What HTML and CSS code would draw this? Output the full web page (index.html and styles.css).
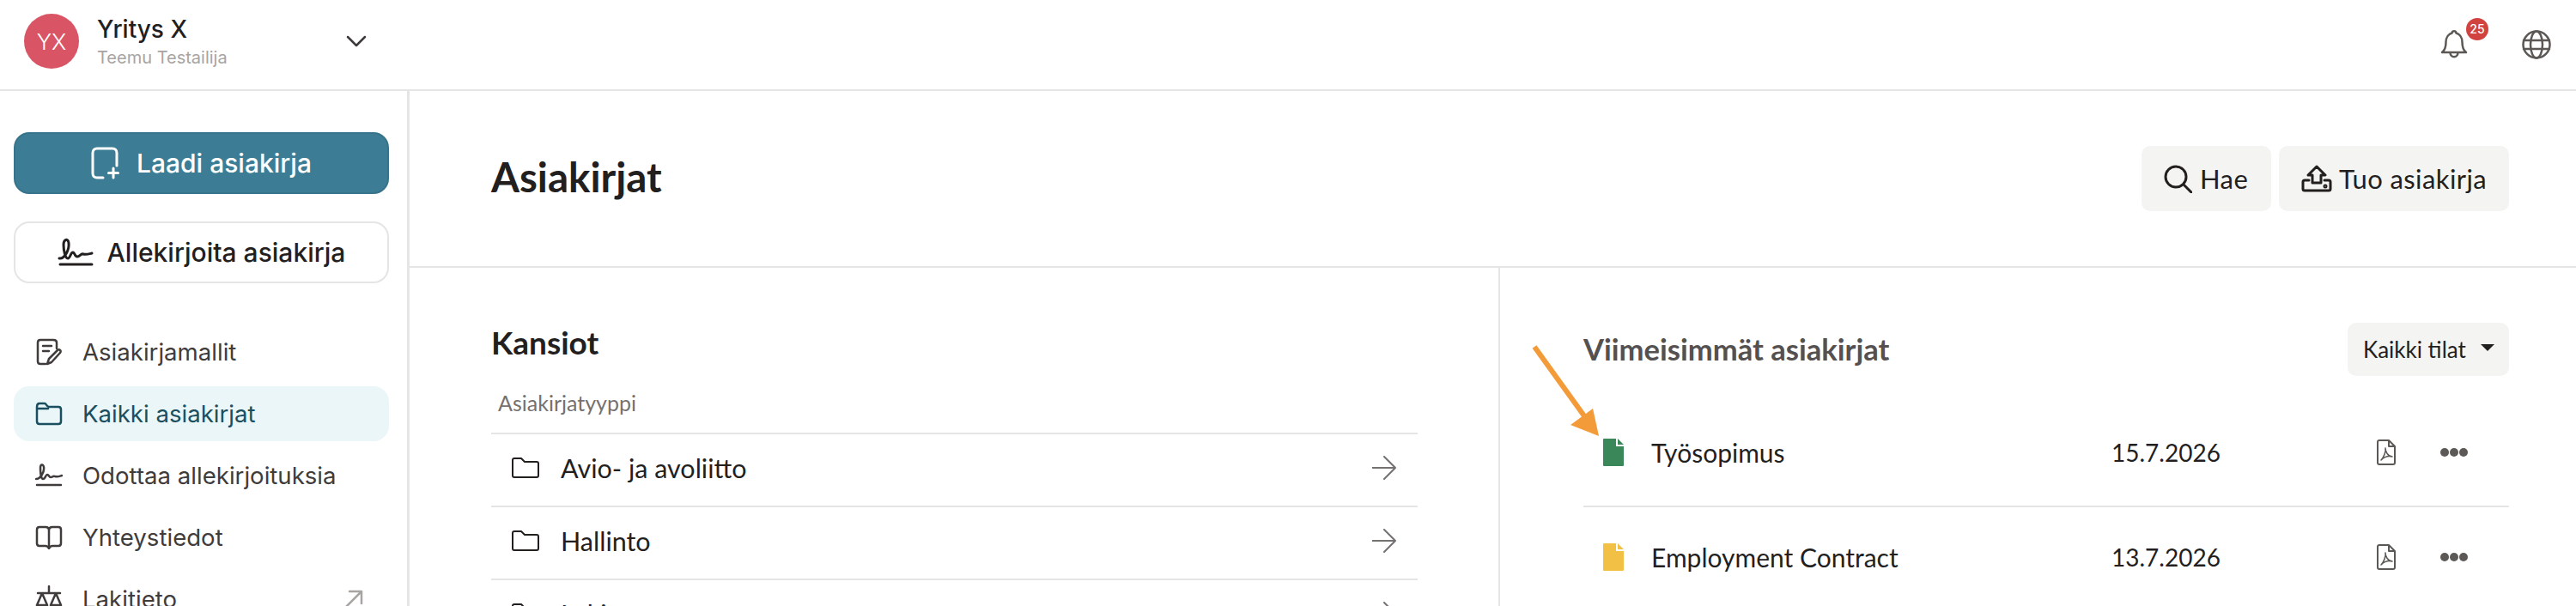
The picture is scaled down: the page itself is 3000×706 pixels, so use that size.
FILE: index.html
```html
<!doctype html>
<html lang="fi">
<head>
    <meta charset="UTF-8">
    <title>Asiakirjat</title>
    <link rel="stylesheet" href="styles.css">
</head>
<body>
    <header class="topbar">
        <div class="account">
            <div class="avatar">YX</div>
            <div class="account-text">
                <div class="account-name">Yritys X</div>
                <div class="account-user">Teemu Testailija</div>
            </div>
            <svg class="chevron" width="24" height="14" viewBox="0 0 24 14"><path d="M2 2 L12 12 L22 2"></path></svg>
        </div>
        <div class="top-icons">
            <div class="bell">
                <svg width="32" height="36" viewBox="0 0 32 36"><path d="M2 27 C6 24 6.500 20 6.500 15 C6.500 9 10 5.500 13.500 4.500 C14 1.500 18 1.500 18.500 4.500 C22 5.500 25.500 9 25.500 15 C25.500 20 26 24 30 27 Z M11.500 27 C11.500 34 20.500 34 20.500 27"></path></svg>
                <span class="badge">25</span>
            </div>
            <svg class="globe" width="36" height="36" viewBox="0 0 36 36"><circle cx="18" cy="18" r="15.500"></circle><ellipse cx="18" cy="18" rx="7" ry="15.500"></ellipse><path d="M3 13 H33 M3 23 H33"></path></svg>
        </div>
    </header>
    <div class="layout">
        <aside class="sidebar">
            <button class="btn-primary">
                <svg width="34" height="38" viewBox="0 0 34 38"><path d="M14 36 H7 C4 36 2 34 2 31 V7 C2 4 4 2 7 2 H25 C28 2 30 4 30 7 V22"></path><path d="M26 25 V36 M20.500 30.500 H31.500"></path></svg>
                Laadi asiakirja
            </button>
            <button class="btn-secondary">
                <svg width="42" height="34" viewBox="0 0 42 34"><path d="M2 24 C8 25 14 14 13 6 C12 0 7 2 7 8 C7 15 9 24 12 24 C15 24 15 17 18 17 C20 17 20 22 23 22 C26 22 27 18 30 19 C33 20 36 19 40 18"></path><path d="M3 31 H40"></path></svg>
                Allekirjoita asiakirja
            </button>
            <nav class="nav">
                <a class="nav-item">
                    <svg width="32" height="32" viewBox="0 0 32 32"><path d="M12 30 H6 C4 30 3 29 3 27 V5 C3 3 4 2 6 2 H21 C23 2 25 3 25 5 V12 M9 9 H19 M9 15 H16"></path><path d="M14 30 L16 24 L26 14 C28 12 31 15 29 17 L19 28 Z"></path></svg>
                    Asiakirjamallit
                </a>
                <a class="nav-item nav-active">
                    <svg width="32" height="28" viewBox="0 0 32 28"><path d="M2 6 C2 3 3 2 5 2 H11 C13 2 13 6 16 6 H27 C29 6 30 7 30 9 V23 C30 25 29 26 27 26 H5 C3 26 2 25 2 23 Z M2 8 H15"></path></svg>
                    Kaikki asiakirjat
                </a>
                <a class="nav-item">
                    <svg width="32" height="28" viewBox="0 0 32 28"><path d="M1 18 C6 18 11 10 10 4 C9 0 6 1 6 5 C6 11 7 18 9 18 C12 18 12 13 14 13 C16 13 16 16 18 16 C20 16 21 14 23 15 C26 16 28 15 31 14"></path><path d="M2 25 H30"></path></svg>
                    Odottaa allekirjoituksia
                </a>
                <a class="nav-item">
                    <svg width="32" height="28" viewBox="0 0 32 28"><path d="M16 6 C16 3 14 2 12 2 H5 C3 2 2 3 2 5 V21 C2 23 3 24 5 24 H12 C14 24 15 25 16 27 C17 25 18 24 20 24 H27 C29 24 30 23 30 21 V5 C30 3 29 2 27 2 H20 C18 2 16 3 16 6 V27"></path></svg>
                    Yhteystiedot
                </a>
                <a class="nav-item">
                    <svg width="32" height="32" viewBox="0 0 32 32"><path d="M16 1 V8 M3 9 H29 M8 9 L2 23 H14 Z M24 9 L18 23 H30 Z M2 23 C2 30 14 30 14 23 M18 23 C18 30 30 30 30 23"></path></svg>
                    Lakitieto
                    <svg class="nav-ext" width="22" height="22" viewBox="0 0 22 22"><path d="M2 20 L20 2 M6 2 H20 V16"></path></svg>
                </a>
            </nav>
        </aside>
        <main class="content">
            <div class="page-head">
                <h1>Asiakirjat</h1>
                <div class="actions">
                    <button class="btn-grey btn-search">
                        <svg width="33" height="33" viewBox="0 0 33 33"><circle cx="14" cy="14" r="12"></circle><path d="M23 23 L32 32"></path></svg>
                        Hae
                    </button>
                    <button class="btn-grey btn-import">
                        <svg width="36" height="32" viewBox="0 0 36 32"><path d="M18 2 L28 12 H23 V21 H13 V12 H8 Z"></path><path d="M9 18 H4 C2.500 18 2 18.500 2 20 V28 C2 29.500 2.500 30 4 30 H32 C33.500 30 34 29.500 34 28 V20 C34 18.500 33.500 18 32 18 H27"></path><circle cx="28" cy="25" r="1"></circle></svg>
                        Tuo asiakirja
                    </button>
                </div>
            </div>
            <div class="columns">
                <section class="folders">
                    <h2>Kansiot</h2>
                    <div class="folders-label">Asiakirjatyyppi</div>
                    <div class="folder-row">
                        <svg class="folder-icon" width="32" height="24" viewBox="0 0 32 24"><path d="M1 3 C1 2 2 1 3 1 H11 L15 5 H29 C30 5 31 6 31 7 V21 C31 22 30 23 29 23 H3 C2 23 1 22 1 21 Z"></path></svg>
                        <span class="folder-name">Avio- ja avoliitto</span>
                        <svg class="arrow-icon" width="28" height="28" viewBox="0 0 28 28"><path d="M0 14 H27 M14 1 L27 14 L14 27"></path></svg>
                    </div>
                    <div class="folder-row">
                        <svg class="folder-icon" width="32" height="24" viewBox="0 0 32 24"><path d="M1 3 C1 2 2 1 3 1 H11 L15 5 H29 C30 5 31 6 31 7 V21 C31 22 30 23 29 23 H3 C2 23 1 22 1 21 Z"></path></svg>
                        <span class="folder-name">Hallinto</span>
                        <svg class="arrow-icon" width="28" height="28" viewBox="0 0 28 28"><path d="M0 14 H27 M14 1 L27 14 L14 27"></path></svg>
                    </div>
                    <div class="folder-row">
                        <svg class="folder-icon" width="32" height="24" viewBox="0 0 32 24"><path d="M1 3 C1 2 2 1 3 1 H11 L15 5 H29 C30 5 31 6 31 7 V21 C31 22 30 23 29 23 H3 C2 23 1 22 1 21 Z"></path></svg>
                        <span class="folder-name">Laki</span>
                        <svg class="arrow-icon" width="28" height="28" viewBox="0 0 28 28"><path d="M0 14 H27 M14 1 L27 14 L14 27"></path></svg>
                    </div>
                </section>
                <section class="recent">
                    <div class="recent-head">
                        <h2 class="recent-title">Viimeisimmät asiakirjat</h2>
                        <button class="btn-grey btn-filter">Kaikki tilat<span class="caret"></span></button>
                    </div>
                    <div class="doc-row">
                        <svg class="doc-icon" width="24" height="32" viewBox="0 0 24 32"><path class="doc-green" d="M1 0 H15 V9 H24 V31 C24 31.500 23.500 32 23 32 H1 C0.500 32 0 31.500 0 31 V1 C0 0.500 0.500 0 1 0 Z M17 0 L24 7 H17 Z"></path></svg>
                        <span class="doc-name">Työsopimus</span>
                        <span class="doc-date">15.7.2026</span>
                        <svg class="pdf-icon" width="22" height="30" viewBox="0 0 22 30"><path d="M3 1 H14 L21 8 V27 C21 28 20 29 19 29 H3 C2 29 1 28 1 27 V3 C1 2 2 1 3 1 Z M14 1 V8 H21"></path><path class="pdf-mark" d="M5 24 C8 21 11 14 10 10 C10 14 13 20 18 20 C14 19 9 20 5 24 Z"></path></svg>
                        <span class="dots"><i></i><i></i><i></i></span>
                    </div>
                    <div class="doc-row">
                        <svg class="doc-icon" width="24" height="32" viewBox="0 0 24 32"><path class="doc-yellow" d="M1 0 H15 V9 H24 V31 C24 31.500 23.500 32 23 32 H1 C0.500 32 0 31.500 0 31 V1 C0 0.500 0.500 0 1 0 Z M17 0 L24 7 H17 Z"></path></svg>
                        <span class="doc-name">Employment Contract</span>
                        <span class="doc-date">13.7.2026</span>
                        <svg class="pdf-icon" width="22" height="30" viewBox="0 0 22 30"><path d="M3 1 H14 L21 8 V27 C21 28 20 29 19 29 H3 C2 29 1 28 1 27 V3 C1 2 2 1 3 1 Z M14 1 V8 H21"></path><path class="pdf-mark" d="M5 24 C8 21 11 14 10 10 C10 14 13 20 18 20 C14 19 9 20 5 24 Z"></path></svg>
                        <span class="dots"><i></i><i></i><i></i></span>
                    </div>
                </section>
            </div>
        </main>
    </div>
    <svg class="callout" width="90" height="120" viewBox="0 0 90 120"><path class="callout-line" d="M7 4 L66 86"></path><path class="callout-head" d="M82 108 L49 95 L75 76 Z"></path></svg>
</body>
</html>
```

FILE: styles.css
```css
* {
    box-sizing: border-box;
}

html,
body {
    height: 706px;
    overflow: hidden;
}

body {
    position: relative;
    margin: 0;
    background: #fff;
    color: #231f1f;
    font-family: "Lato", "Liberation Sans", sans-serif;
}

svg {
    display: block;
    flex: none;
    fill: none;
    stroke-linecap: round;
    stroke-linejoin: round;
}

button {
    font-family: inherit;
    cursor: pointer;
}

h1,
h2 {
    margin: 0;
    font-weight: 700;
}

/* top bar */

.topbar {
    display: flex;
    justify-content: space-between;
    align-items: center;
    height: 106px;
    padding: 0 28px 8px 28px;
    border-bottom: 2px solid #e5e5e5;
}

.account {
    display: flex;
    align-items: center;
}

.avatar {
    display: flex;
    justify-content: center;
    align-items: center;
    width: 64px;
    height: 64px;
    border-radius: 50%;
    background: #d95565;
    color: #fff;
    font-family: "Inter", sans-serif;
    font-size: 26px;
    font-weight: 300;
}

.account-text {
    width: 311px;
    padding-left: 21px;
    font-family: "Inter", sans-serif;
}

.account-name {
    font-size: 28px;
    font-weight: 500;
    line-height: 36px;
}

.account-user {
    margin-top: 2px;
    color: #a8a4a2;
    font-size: 20px;
    line-height: 26px;
}

.chevron {
    stroke: #3f3b3a;
    stroke-width: 2.500px;
}

.top-icons {
    display: flex;
    align-items: center;
    gap: 62px;
    padding-top: 8px;
}

.bell {
    position: relative;
}

.bell svg {
    stroke: #5c5856;
    stroke-width: 2.500px;
}

.badge {
    position: absolute;
    top: -13px;
    left: 30px;
    width: 26px;
    height: 26px;
    border-radius: 50%;
    background: #d0433f;
    color: #fff;
    font-family: "Inter", sans-serif;
    font-size: 14px;
    font-weight: 500;
    line-height: 26px;
    text-align: center;
}

.globe {
    stroke: #5c5856;
    stroke-width: 2.500px;
}

/* sidebar */

.layout {
    display: flex;
    height: 600px;
}

.sidebar {
    flex: none;
    width: 477px;
    padding: 48px 21px 0 16px;
    border-right: 3px solid #e5e5e5;
    font-family: "Inter", sans-serif;
}

.btn-primary,
.btn-secondary {
    display: flex;
    justify-content: center;
    align-items: center;
    width: 100%;
    height: 72px;
    border-radius: 18px;
    font-size: 30px;
    font-weight: 500;
}

.btn-primary {
    gap: 19px;
    margin-bottom: 32px;
    border: 2px solid #37738a;
    background: #3c7d95;
    color: #fff;
}

.btn-primary svg {
    stroke: #fff;
    stroke-width: 3px;
}

.btn-secondary {
    gap: 16px;
    border: 2px solid #e5e5e5;
    background: #fff;
    color: #231f1f;
}

.btn-secondary svg {
    stroke: #231f1f;
    stroke-width: 3px;
}

.nav {
    display: flex;
    flex-direction: column;
    gap: 8px;
    margin-top: 48px;
}

.nav-item {
    display: flex;
    align-items: center;
    gap: 23px;
    height: 64px;
    padding-left: 25px;
    border-radius: 18px;
    color: #403c3b;
    font-size: 27.600px;
}

.nav-item svg {
    width: 32px;
    stroke: #403c3b;
    stroke-width: 2.500px;
}

.nav-active {
    background: #eaf6f8;
    color: #1b4f60;
}

.nav-item.nav-active svg {
    stroke: #1b4f60;
}

.nav-item .nav-ext {
    width: 22px;
    margin-left: auto;
    margin-right: 30px;
    stroke: #a8a4a2;
}

/* main area */

.content {
    flex: 1;
    min-width: 0;
}

.page-head {
    display: flex;
    justify-content: space-between;
    align-items: center;
    height: 206px;
    padding: 0 78px 0 95px;
    border-bottom: 2px solid #e5e5e5;
}

h1 {
    margin-top: -6px;
    font-size: 47.500px;
}

.actions {
    display: flex;
    gap: 9px;
}

.btn-grey {
    display: flex;
    align-items: center;
    border: 0;
    border-radius: 10px;
    background: #f4f4f2;
    color: #231f1f;
    font-size: 31px;
    letter-spacing: 0.400px;
}

.btn-grey svg {
    stroke: #231f1f;
    stroke-width: 3px;
}

.btn-search {
    gap: 9px;
    width: 151px;
    height: 76px;
    padding-left: 26px;
}

.btn-import {
    gap: 8px;
    width: 268px;
    height: 76px;
    padding-left: 26px;
}

.columns {
    display: flex;
    height: 394px;
}

.folders {
    flex: none;
    width: 1270px;
    padding: 62px 94px 0 95px;
    border-right: 2px solid #e5e5e5;
}

.folders h2 {
    font-size: 37px;
    line-height: 50px;
}

.folders-label {
    height: 52px;
    margin-top: 30px;
    padding-left: 8px;
    color: #757170;
    font-size: 25px;
    line-height: 30px;
    border-bottom: 2px solid #e5e5e5;
}

.folder-row {
    display: flex;
    align-items: center;
    height: 85px;
    padding: 0 25px 6px 24px;
    border-bottom: 2px solid #e5e5e5;
}

.folder-icon {
    stroke: #231f1f;
    stroke-width: 2px;
}

.folder-name {
    margin-left: 25px;
    font-size: 30.500px;
}

.arrow-icon {
    margin-left: auto;
    stroke: #757170;
    stroke-width: 2px;
}

.recent {
    flex: 1;
    min-width: 0;
    padding: 64px 78px 0 97px;
}

.recent-head {
    display: flex;
    justify-content: space-between;
    align-items: center;
    height: 62px;
    margin-bottom: 31px;
}

.recent-title {
    margin-top: -2px;
    color: #555150;
    font-size: 34.600px;
}

.btn-filter {
    width: 188px;
    height: 62px;
    padding-left: 18px;
    font-size: 26px;
    letter-spacing: 0;
}

.caret {
    width: 0;
    height: 0;
    margin: -4px 0 0 17px;
    border-top: 8px solid #231f1f;
    border-right: 8px solid transparent;
    border-left: 8px solid transparent;
}

.doc-row {
    display: flex;
    align-items: center;
    height: 122px;
    padding: 0 0 4px 23px;
    border-bottom: 2px solid #e5e5e5;
}

.doc-icon {
    stroke: none;
}

.doc-green {
    fill: #3a8759;
}

.doc-yellow {
    fill: #f2c045;
}

.doc-name {
    width: 536px;
    margin-left: 32px;
    font-size: 30px;
}

.doc-date {
    width: 309px;
    font-size: 28px;
}

.pdf-icon {
    stroke: #5c5856;
    stroke-width: 2px;
}

.pdf-mark {
    stroke-width: 1.500px;
}

.dots {
    display: flex;
    gap: 1px;
    margin-left: 52px;
}

.dots i {
    width: 10px;
    height: 10px;
    border-radius: 50%;
    background: #5c5856;
}

/* annotation drawn over the screenshot */

.callout {
    position: absolute;
    top: 400px;
    left: 1780px;
}

.callout-line {
    stroke: #f29b38;
    stroke-width: 6px;
    stroke-linecap: butt;
}

.callout-head {
    fill: #f29b38;
}
```
